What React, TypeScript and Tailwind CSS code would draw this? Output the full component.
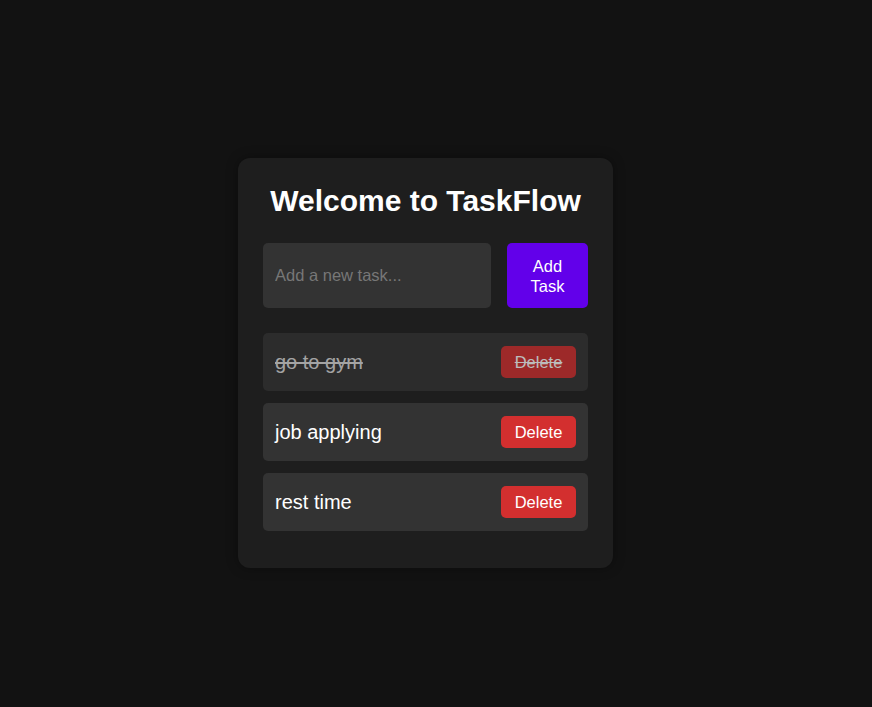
import { useState } from "react";

type Task = { id: number; text: string; done: boolean };

const INITIAL: Task[] = [
  { id: 1, text: "go to gym", done: true },
  { id: 2, text: "job applying", done: false },
  { id: 3, text: "rest time", done: false },
];

export default function App() {
  const [tasks, setTasks] = useState<Task[]>(INITIAL);
  const [draft, setDraft] = useState("");

  const addTask = () => {
    const text = draft.trim();
    if (!text) return;
    setTasks((t) => [...t, { id: Date.now(), text, done: false }]);
    setDraft("");
  };

  return (
    <div className="flex min-h-[707px] w-full items-center justify-center bg-[#121212] pt-[19px] pr-[21px] font-['Liberation_Sans',Arial,sans-serif] text-white">
      <div className="w-[375px] rounded-xl bg-[#1e1e1e] p-[25px] shadow-[0_0_12px_rgba(0,0,0,0.35)]">
        <h1 className="mb-[24px] text-center text-[30px] leading-[36px] font-bold">Welcome to TaskFlow</h1>

        <div className="mb-[25px] flex h-[65px] gap-4">
          <input
            value={draft}
            onChange={(e) => setDraft(e.target.value)}
            placeholder="Add a new task..."
            className="min-w-0 flex-1 rounded-[5px] bg-[#333] px-3 text-[16.5px] text-white outline-none placeholder:text-[#777]"
          />
          <button
            onClick={addTask}
            className="w-[81px] rounded-[5px] bg-[#6200ea] px-[10px] text-[16.5px] leading-5 text-white"
          >
            Add Task
          </button>
        </div>

        <ul className="flex flex-col gap-3 pb-[12px]">
          {tasks.map((task) => (
            <li
              key={task.id}
              onClick={() =>
                setTasks((all) => all.map((t) => (t.id === task.id ? { ...t, done: !t.done } : t)))
              }
              className={
                task.done
                  ? "flex h-[58px] items-center justify-between rounded-[5px] bg-[#333] px-3 opacity-70"
                  : "flex h-[58px] items-center justify-between rounded-[5px] bg-[#333] px-3"
              }
            >
              <span className={task.done ? "text-[20px] text-[#ddd] line-through" : "text-[20px] text-white"}>
                {task.text}
              </span>
              <button
                onClick={(e) => {
                  e.stopPropagation();
                  setTasks((all) => all.filter((t) => t.id !== task.id));
                }}
                className={
                  task.done
                    ? "h-8 w-[75px] rounded-[5px] bg-[#d32f2f] text-[16.5px] text-white line-through"
                    : "h-8 w-[75px] rounded-[5px] bg-[#d32f2f] text-[16.5px] text-white"
                }
              >
                Delete
              </button>
            </li>
          ))}
        </ul>
      </div>
    </div>
  );
}
